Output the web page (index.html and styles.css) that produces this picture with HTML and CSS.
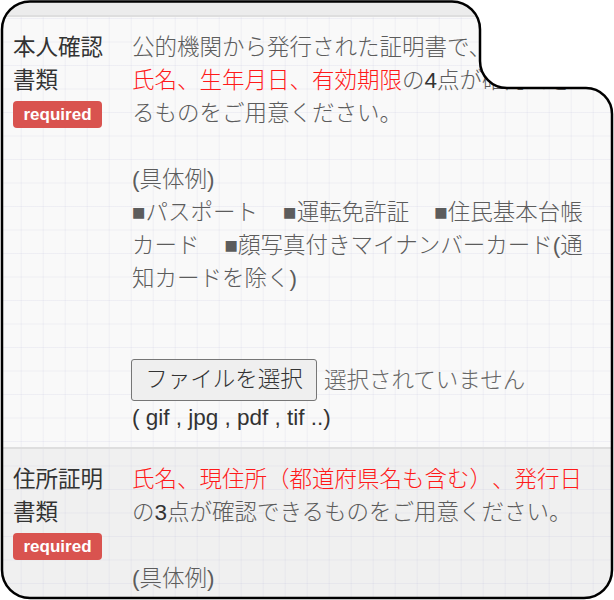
FILE: index.html
```html
<!DOCTYPE html>
<html lang="ja">
<head>
<meta charset="utf-8">
<title>本人確認書類</title>
<link rel="stylesheet" href="styles.css">
</head>
<body>
<div class="page">
  <div class="topbar"></div>
  <section class="row row-first">
    <div class="label">
      <span class="label-text">本人確認書類</span>
      <span class="badge">required</span>
    </div>
    <div class="field">
      <p class="desc">公的機関から発行された証明書で、顔写真、<span class="red">氏名、生年月日、有効期限</span>の<span class="num">4</span>点が確認できるものをご用意ください。<br><br>(具体例)<br>■パスポート&nbsp;&nbsp;&nbsp;&nbsp;■運転免許証&nbsp;&nbsp;&nbsp;&nbsp;■住民基本台帳カード&nbsp;&nbsp;&nbsp;&nbsp;■顔写真付きマイナンバーカード(通知カードを除く)</p>
      <div class="file-row">
        <button class="file-btn" type="button">ファイルを選択</button>
        <span class="file-status">選択されていません</span>
      </div>
      <div class="ext">( gif , jpg , pdf , tif ..)</div>
    </div>
  </section>
  <section class="row row-second">
    <div class="label">
      <span class="label-text">住所証明書類</span>
      <span class="badge">required</span>
    </div>
    <div class="field">
      <p class="desc"><span class="red">氏名、現住所（都道府県名も含む）、発行日</span>の<span class="num">3</span>点が確認できるものをご用意ください。<br><br>(具体例)</p>
    </div>
  </section>
  <svg class="frame" width="614" height="600" viewBox="0 0 614 600" aria-hidden="true">
    <path class="frame-mask" fill-rule="evenodd" d="M0 0H614V600H0Z M2 29.5A28 28 0 0 1 30 1.5H452A28 28 0 0 1 480 29.5V61A27 27 0 0 0 507 88H586A26 26 0 0 1 612 114V570A28 28 0 0 1 584 598H30A28 28 0 0 1 2 570Z"/>
    <path class="frame-line" d="M2 29.5A28 28 0 0 1 30 1.5H452A28 28 0 0 1 480 29.5V61A27 27 0 0 0 507 88H586A26 26 0 0 1 612 114V570A28 28 0 0 1 584 598H30A28 28 0 0 1 2 570Z"/>
  </svg>
</div>
</body>
</html>
```

FILE: styles.css
```css
html, body {
  margin: 0;
  padding: 0;
  background: #ffffff;
}

body {
  width: 614px;
  height: 600px;
  overflow: hidden;
  font-family: "Liberation Sans", "Noto Sans CJK JP", sans-serif;
  text-spacing-trim: space-all;
}

.page {
  position: relative;
  width: 614px;
  height: 600px;
  overflow: hidden;
}

.topbar {
  height: 15px;
  background: #ececec;
  border-bottom: 2px solid #dedede;
}

.row {
  display: flex;
  padding: 14px 0 13px;
  border-bottom: 2px solid #dedede;
  background-color: #f9f9f9;
  background-image:
    linear-gradient(to right, rgba(185, 185, 215, 0.16) 1px, transparent 1px),
    linear-gradient(to bottom, rgba(185, 185, 215, 0.16) 1px, transparent 1px);
  background-size: 22px 23.5px;
  background-position: 20.7px 1px;
}

.row-second {
  background-color: #f0f0f0;
  background-position: 20.7px 16.5px;
}

.label {
  flex: none;
  width: 100px;
  padding: 0 19px 0 13px;
  color: #333333;
  font-size: 22.5px;
  line-height: 33px;
}

.label-text {
  display: block;
}

.badge {
  display: inline-block;
  margin-top: 4px;
  height: 27px;
  line-height: 27px;
  padding: 0 10.5px;
  background: #d9534f;
  color: #ffffff;
  font-family: "Liberation Sans", sans-serif;
  font-weight: bold;
  font-size: 17px;
  border-radius: 4px;
  vertical-align: top;
}

.field {
  flex: none;
  width: 458px;
  font-size: 22.5px;
  font-weight: 300;
  line-height: 33px;
  color: #5c5c5c;
}

.desc {
  margin: 0;
}

.red {
  color: #ff1a1a;
}

.num {
  color: #333333;
}

.file-row {
  display: flex;
  align-items: center;
  height: 42px;
  margin-top: 64px;
  margin-left: -1px;
}

.file-btn {
  box-sizing: border-box;
  height: 42px;
  padding: 0 13.25px;
  font-family: "Liberation Sans", "Noto Sans CJK JP", sans-serif;
  font-size: 22.5px;
  font-weight: 300;
  line-height: 1;
  color: #333333;
  background: #efefef;
  border: 1px solid #767676;
  border-radius: 3px;
}

.file-status {
  margin-left: 7px;
  color: #666666;
}

.ext {
  color: #333333;
  font-weight: normal;
}

.frame {
  position: absolute;
  left: 0;
  top: 0;
  pointer-events: none;
}

.frame-mask {
  fill: #ffffff;
}

.frame-line {
  fill: none;
  stroke: #000000;
  stroke-width: 2.5;
}
```
